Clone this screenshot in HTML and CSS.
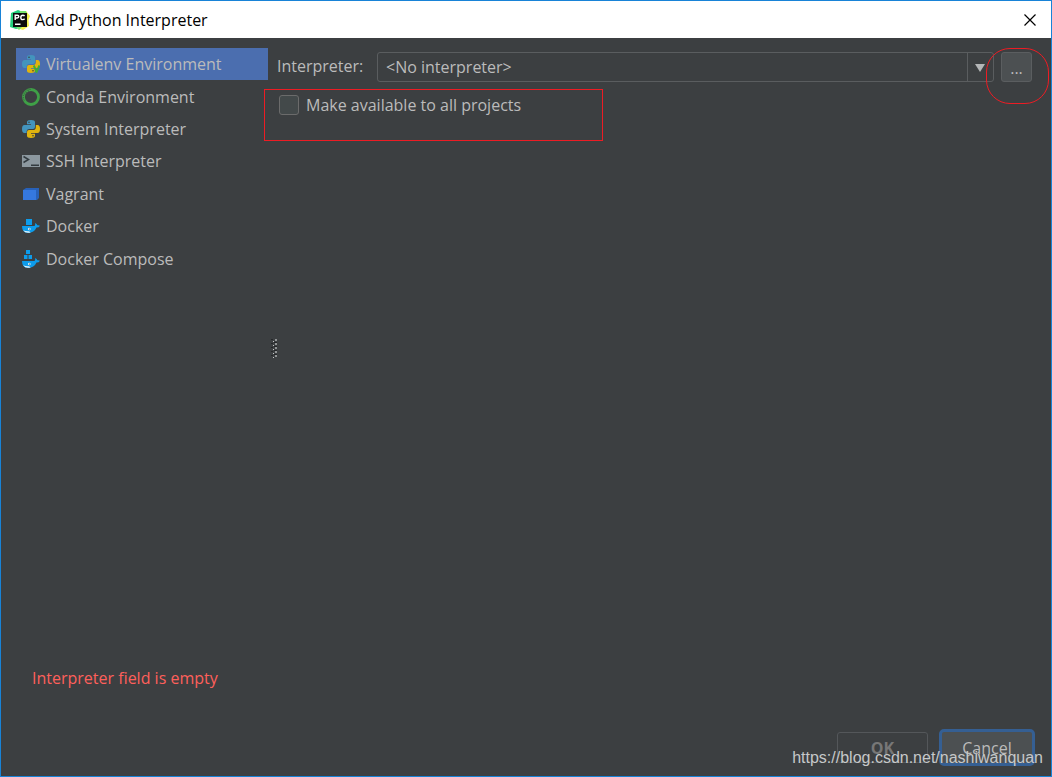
FILE: index.html
```
<!DOCTYPE html>
<html lang="en">
<head>
<meta charset="utf-8">
<title>Add Python Interpreter</title>
<link rel="stylesheet" href="styles.css">
</head>
<body>
<svg width="0" height="0" class="defs" aria-hidden="true">
  <symbol id="python" viewBox="0 0 18 18">
    <path fill="#4394bd" d="M5 2.200Q5 0 9 0t4 2.200V7q0 2-2 2H7Q4.600 9 4.600 11.500V13H2.500Q0 13 0 9t2.500-4H9V4.300H5z"/>
    <path fill="#e0b40e" d="M13 15.800Q13 18 9 18t-4-2.200V12q0-2 2-2h4q2.800 0 2.800-2.800V5h1.700Q18 5 18 9t-2.500 4H9v.7h4z"/>
    <circle cx="7" cy="2.200" r=".8" fill="#3c3f41"/><circle cx="11" cy="15.800" r=".8" fill="#3c3f41"/>
  </symbol>
  <symbol id="whale" viewBox="0 0 18 10">
    <path fill="#0d9ceb" d="M0 3h12.500Q13.600 2 13 0q2 .7 2.400 2.300Q17 2 18 2.700 17 4.500 14.500 4.600 12.200 10 6 10 0 10 0 3z"/>
    <path fill="#e6f5fc" d="M1.200 7.200Q4 8.600 7 8.200L8.700 9.400Q3.300 10.600 1.200 7.200z"/>
    <circle cx="7.300" cy="6" r="1.300" fill="#e6f5fc"/><circle cx="7.500" cy="6" r=".6" fill="#243f50"/>
  </symbol>
</svg>
<div class="window">
  <header class="titlebar">
    <svg class="app-icon" viewBox="0 0 20 20" aria-hidden="true">
      <path fill="#22d07d" d="M1 3 8 0l5 2-2 16-5 1-6-2z"/>
      <path fill="#f2ef4c" d="M11 2l5-1 4 5-1.500 4 .5 6-6 4-6-2z"/>
      <path fill="#75e36b" d="M10 1l6 0 1 3h-7zM6 17h6l-3 3z"/>
      <path fill="#0b0b0b" d="M3 3h14v14H3z"/>
      <path fill="none" stroke="#fff" stroke-width="1.400" d="M5.200 10V5.200h2q1.600 0 1.600 1.400T7.200 8h-2M14.600 6Q13.900 5.200 12.800 5.200q-2 0-2 2.200t2 2.200q1.100 0 1.800-.8M5 14.300h5.500"/>
    </svg>
    <h1>Add Python Interpreter</h1>
    <button class="close" type="button" aria-label="Close"><svg viewBox="0 0 12 12"><path d="M.5.5l11 11M11.500.5l-11 11" stroke="#000" stroke-width="1.200"/></svg></button>
  </header>
  <main class="content">
    <nav class="sidebar" aria-label="Environment type">
      <button type="button" class="item selected"><svg class="icon" viewBox="0 0 18 18"><use href="#python" width="18" height="18"/><path fill="none" stroke="#3fae37" stroke-width="2" d="M11.800 10.500l2.700 6.500 2.900-6.500"/></svg>Virtualenv Environment</button>
      <button type="button" class="item"><svg class="icon" viewBox="0 0 18 18"><circle cx="9" cy="9" r="7.500" fill="none" stroke="#3fa047" stroke-width="2.800"/><path fill="none" stroke="#3c3f41" stroke-width=".9" stroke-dasharray="1 1.300" d="M8.500 1.400A7.600 7.600 0 0 0 2.500 13M7 2.800A6.600 6.600 0 0 0 2.800 8"/></svg>Conda Environment</button>
      <button type="button" class="item"><svg class="icon" viewBox="0 0 18 18"><use href="#python" width="18" height="18"/></svg>System Interpreter</button>
      <button type="button" class="item"><svg class="icon" viewBox="0 0 18 18"><path fill="#8c989f" d="M0 3h18v12H0z"/><path fill="none" stroke="#333b40" stroke-width="1.500" d="M1.500 4.500l5 3-5 3M9 13.200h8"/></svg>SSH Interpreter</button>
      <button type="button" class="item"><svg class="icon" viewBox="0 0 18 18"><path fill="#2861b8" d="M4 3h13v10l-2 2H1V5z"/><path fill="#3578df" d="M1 5h13v10H1z"/></svg>Vagrant</button>
      <button type="button" class="item"><svg class="icon" viewBox="0 0 18 18"><path fill="#0d9ceb" d="M4 2h6v6H4z"/><use href="#whale" y="6" width="18" height="10"/></svg>Docker</button>
      <button type="button" class="item"><svg class="icon" viewBox="0 0 18 18"><path fill="#0d9ceb" d="M4 0h4v4H4zM2 5h3.500v4H2zM6.500 5H10v4H6.500z"/><use href="#whale" y="8" width="18" height="10"/></svg>Docker Compose</button>
    </nav>
    <div class="splitter" role="separator" aria-orientation="vertical">
      <svg viewBox="0 0 6 20" aria-hidden="true">
        <path stroke="#242628" stroke-width="2" stroke-dasharray="1 3" d="M1 1v19"/>
        <path stroke="#242628" stroke-width="3" stroke-dasharray="1 3" d="M4.500 4v16"/>
        <path stroke="#c4c6c7" stroke-width="1" stroke-dasharray="1 3" d="M2.500 3v17"/>
        <path stroke="#909394" stroke-width="2" stroke-dasharray="2 2" d="M5 1v18"/>
      </svg>
    </div>
    <section class="form">
      <div class="field">
        <label for="interp">Interpreter:</label>
        <div class="combo">
          <select id="interp"><option>&lt;No interpreter&gt;</option></select>
          <span class="arrow"><svg viewBox="0 0 10 8"><path fill="#b4b6b7" d="M0 0h10L5 8z"/></svg></span>
        </div>
        <div class="browse-wrap">
          <button class="browse" type="button" aria-label="Browse">...</button>
          <span class="mark mark-round"></span>
        </div>
      </div>
      <div class="option">
        <input type="checkbox" id="share"><label for="share">Make available to all projects</label>
        <span class="mark mark-box"></span>
      </div>
    </section>
  </main>
  <p class="error">Interpreter field is empty</p>
  <footer class="actions">
    <button class="btn ok" type="button" disabled>OK</button>
    <button class="btn cancel" type="button">Cancel</button>
    <span class="watermark">https://blog.csdn.net/nashiwanquan</span>
  </footer>
</div>
</body>
</html>
```
FILE: styles.css
```
* { box-sizing: border-box; }
body {
  margin: 0;
  font: 16px/24px "Open Sans", "Noto Sans", sans-serif;
  color: #bbbbbb;
  background: #3c3f41;
}
button, select { font: inherit; color: inherit; }
.defs { position: absolute; }
.window {
  min-height: 100vh;
  display: flex;
  flex-direction: column;
  border: 1px solid #1883d7;
  background: #3c3f41;
}
.titlebar {
  display: flex;
  align-items: center;
  height: 37px;
  padding: 0 8px 0 9px;
  background: #fff;
  color: #000;
}
.app-icon { width: 20px; height: 20px; margin-right: 5px; }
h1 { margin: 0; font-size: 16px; line-height: 24px; font-weight: 400; flex: 1; }
.close {
  display: flex;
  padding: 7px;
  border: 0;
  background: none;
}
.close svg { width: 12px; height: 12px; }
.content {
  flex: 1;
  display: grid;
  grid-template-columns: 252px 9px 1fr;
  padding: 10px 19px 0 15px;
}
.sidebar {
  display: grid;
  grid-template-rows: repeat(7, 1fr);
  height: 227px;
  align-self: start;
}
.item {
  display: flex;
  align-items: center;
  gap: 6px;
  padding: 0 6px;
  border: 0;
  background: none;
  text-align: left;
}
.selected { background: #4b6eaf; }
.icon { width: 18px; height: 18px; flex: none; }
.splitter { display: flex; align-items: center; justify-content: flex-end; height: 600px; }
.splitter svg { width: 6px; height: 20px; }
.field { display: flex; align-items: center; padding-top: 4px; }
.field label { width: 100px; line-height: 26px; padding-bottom: 2px; }
.combo {
  flex: 1;
  display: flex;
  height: 30px;
  border: 1px solid #5a5d5f;
  border-radius: 3px;
}
.combo select {
  flex: 1;
  appearance: none;
  border: 0;
  padding: 0 8px;
  background: none;
}
.arrow {
  display: flex;
  align-items: center;
  justify-content: center;
  width: 26px;
  padding: 1px 2px 0 0;
  border-left: 1px solid #5a5d5f;
}
.arrow svg { width: 10px; height: 8px; }
.browse-wrap { position: relative; margin-left: 7px; }
.browse {
  display: block;
  width: 31px;
  height: 30px;
  padding: 2px 0 0;
  border: 1px solid #5b5e60;
  border-radius: 3px;
  background: #4c5052;
}
.mark { position: absolute; border: 1px solid #ed1c24; pointer-events: none; }
.mark-round { left: -15px; top: -4px; width: 63px; height: 56px; border-radius: 24px; }
.option {
  position: relative;
  display: flex;
  align-items: center;
  gap: 7px;
  padding: 11px 0 0 2px;
}
.option input {
  appearance: none;
  width: 20px;
  height: 20px;
  margin: 0;
  border: 1px solid #6b6b6b;
  border-radius: 3px;
  background: #43494a;
}
.mark-box { left: -13px; top: 7px; width: 339px; height: 52px; }
.error { margin: 0; padding: 0 31px; color: #ff5f5b; }
.actions {
  position: relative;
  display: flex;
  justify-content: flex-end;
  align-items: center;
  gap: 11px;
  padding: 39px 16px 10px;
}
.btn { width: 91px; height: 31px; padding: 0; border: 1px solid #54575a; border-radius: 3px; background: #3c3f41; }
.ok { color: #777777; font-weight: 700; }
.cancel { width: 96px; height: 37px; border: 3px solid #355f93; border-radius: 5px; background: #4c5052; }
.watermark {
  position: absolute;
  right: 8px;
  bottom: 6px;
  font: 16px/24px "Liberation Sans", Arial, sans-serif;
  color: #c6c8c9;
  pointer-events: none;
}
```
